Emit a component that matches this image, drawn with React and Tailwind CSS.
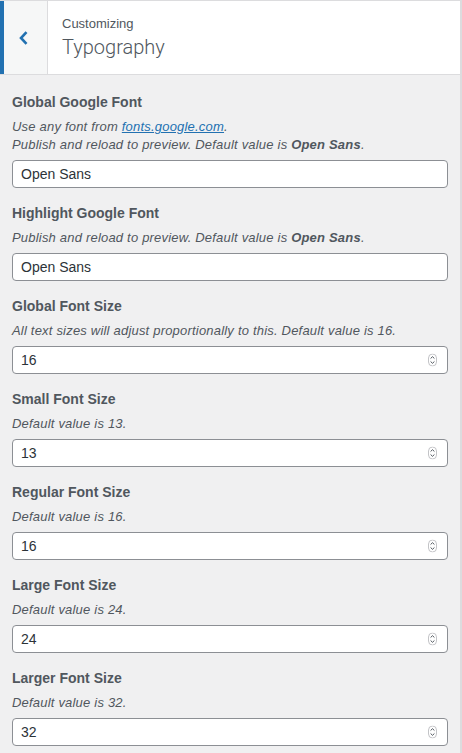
import React from "react";

function Spinner() {
  return (
    <svg
      className="absolute right-[11px] top-1/2 -translate-y-1/2"
      width="9"
      height="13"
      viewBox="0 0 9 13"
      fill="none"
    >
      <rect x="0.5" y="0.5" width="8" height="12" rx="4" stroke="#c3c4c7" />
      <polyline points="2.6,5 4.5,3.2 6.4,5" stroke="#50575e" strokeWidth="1" />
      <polyline points="2.6,8 4.5,9.8 6.4,8" stroke="#50575e" strokeWidth="1" />
    </svg>
  );
}

function Field({ label, desc, value, number }) {
  return (
    <div className="mb-[15px]">
      <div className="mb-[6px] text-[14px] font-semibold leading-[20px] text-[#50575e]">
        {label}
      </div>
      <div className="mb-[6px] text-[13px] italic leading-[18px] tracking-[0.2px] text-[#50575e]">
        {desc}
      </div>
      <div className="relative">
        <input
          type="text"
          defaultValue={value}
          className="block h-[28px] w-full rounded-[4px] border border-[#8c8f94] bg-white pl-[8px] pr-[24px] text-[14px] text-[#2c3338] outline-none"
        />
        {number && <Spinner />}
      </div>
    </div>
  );
}

export default function App() {
  return (
    <div className="min-h-screen w-full border-r-2 border-[#dcdcde] bg-[#f0f0f1] font-['Liberation_Sans',Arial,sans-serif]">
      <div className="flex h-[75px] border-y border-[#dcdcde] bg-white">
        <div className="flex w-[48px] shrink-0 items-center border-l-4 border-r border-l-[#2271b1] border-r-[#dcdcde] bg-[#f6f7f7] pl-[15px]">
          <svg width="9" height="14" viewBox="0 0 9 14" fill="none">
            <polyline
              points="7.5,1.2 2,7 7.5,12.8"
              stroke="#2271b1"
              strokeWidth="2.6"
              strokeLinejoin="miter"
            />
          </svg>
        </div>
        <div className="pl-[14px] pt-[14px]">
          <div className="text-[13px] leading-[18px] text-[#50575e]">Customizing</div>
          <div className="font-['Roboto',Arial,sans-serif] text-[20px] font-light leading-[28px] text-[#50575e]">
            Typography
          </div>
        </div>
      </div>
      <div className="px-[12px] pt-[17px]">
        <Field
          label="Global Google Font"
          desc={
            <>
              Use any font from{" "}
              <span className="text-[#2271b1] underline">fonts.google.com</span>.
              <br />
              Publish and reload to preview. Default value is{" "}
              <span className="font-bold">Open Sans</span>.
            </>
          }
          value="Open Sans"
        />
        <Field
          label="Highlight Google Font"
          desc={
            <>
              Publish and reload to preview. Default value is{" "}
              <span className="font-bold">Open Sans</span>.
            </>
          }
          value="Open Sans"
        />
        <Field
          label="Global Font Size"
          desc="All text sizes will adjust proportionally to this. Default value is 16."
          value="16"
          number
        />
        <Field label="Small Font Size" desc="Default value is 13." value="13" number />
        <Field label="Regular Font Size" desc="Default value is 16." value="16" number />
        <Field label="Large Font Size" desc="Default value is 24." value="24" number />
        <Field label="Larger Font Size" desc="Default value is 32." value="32" number />
      </div>
    </div>
  );
}
